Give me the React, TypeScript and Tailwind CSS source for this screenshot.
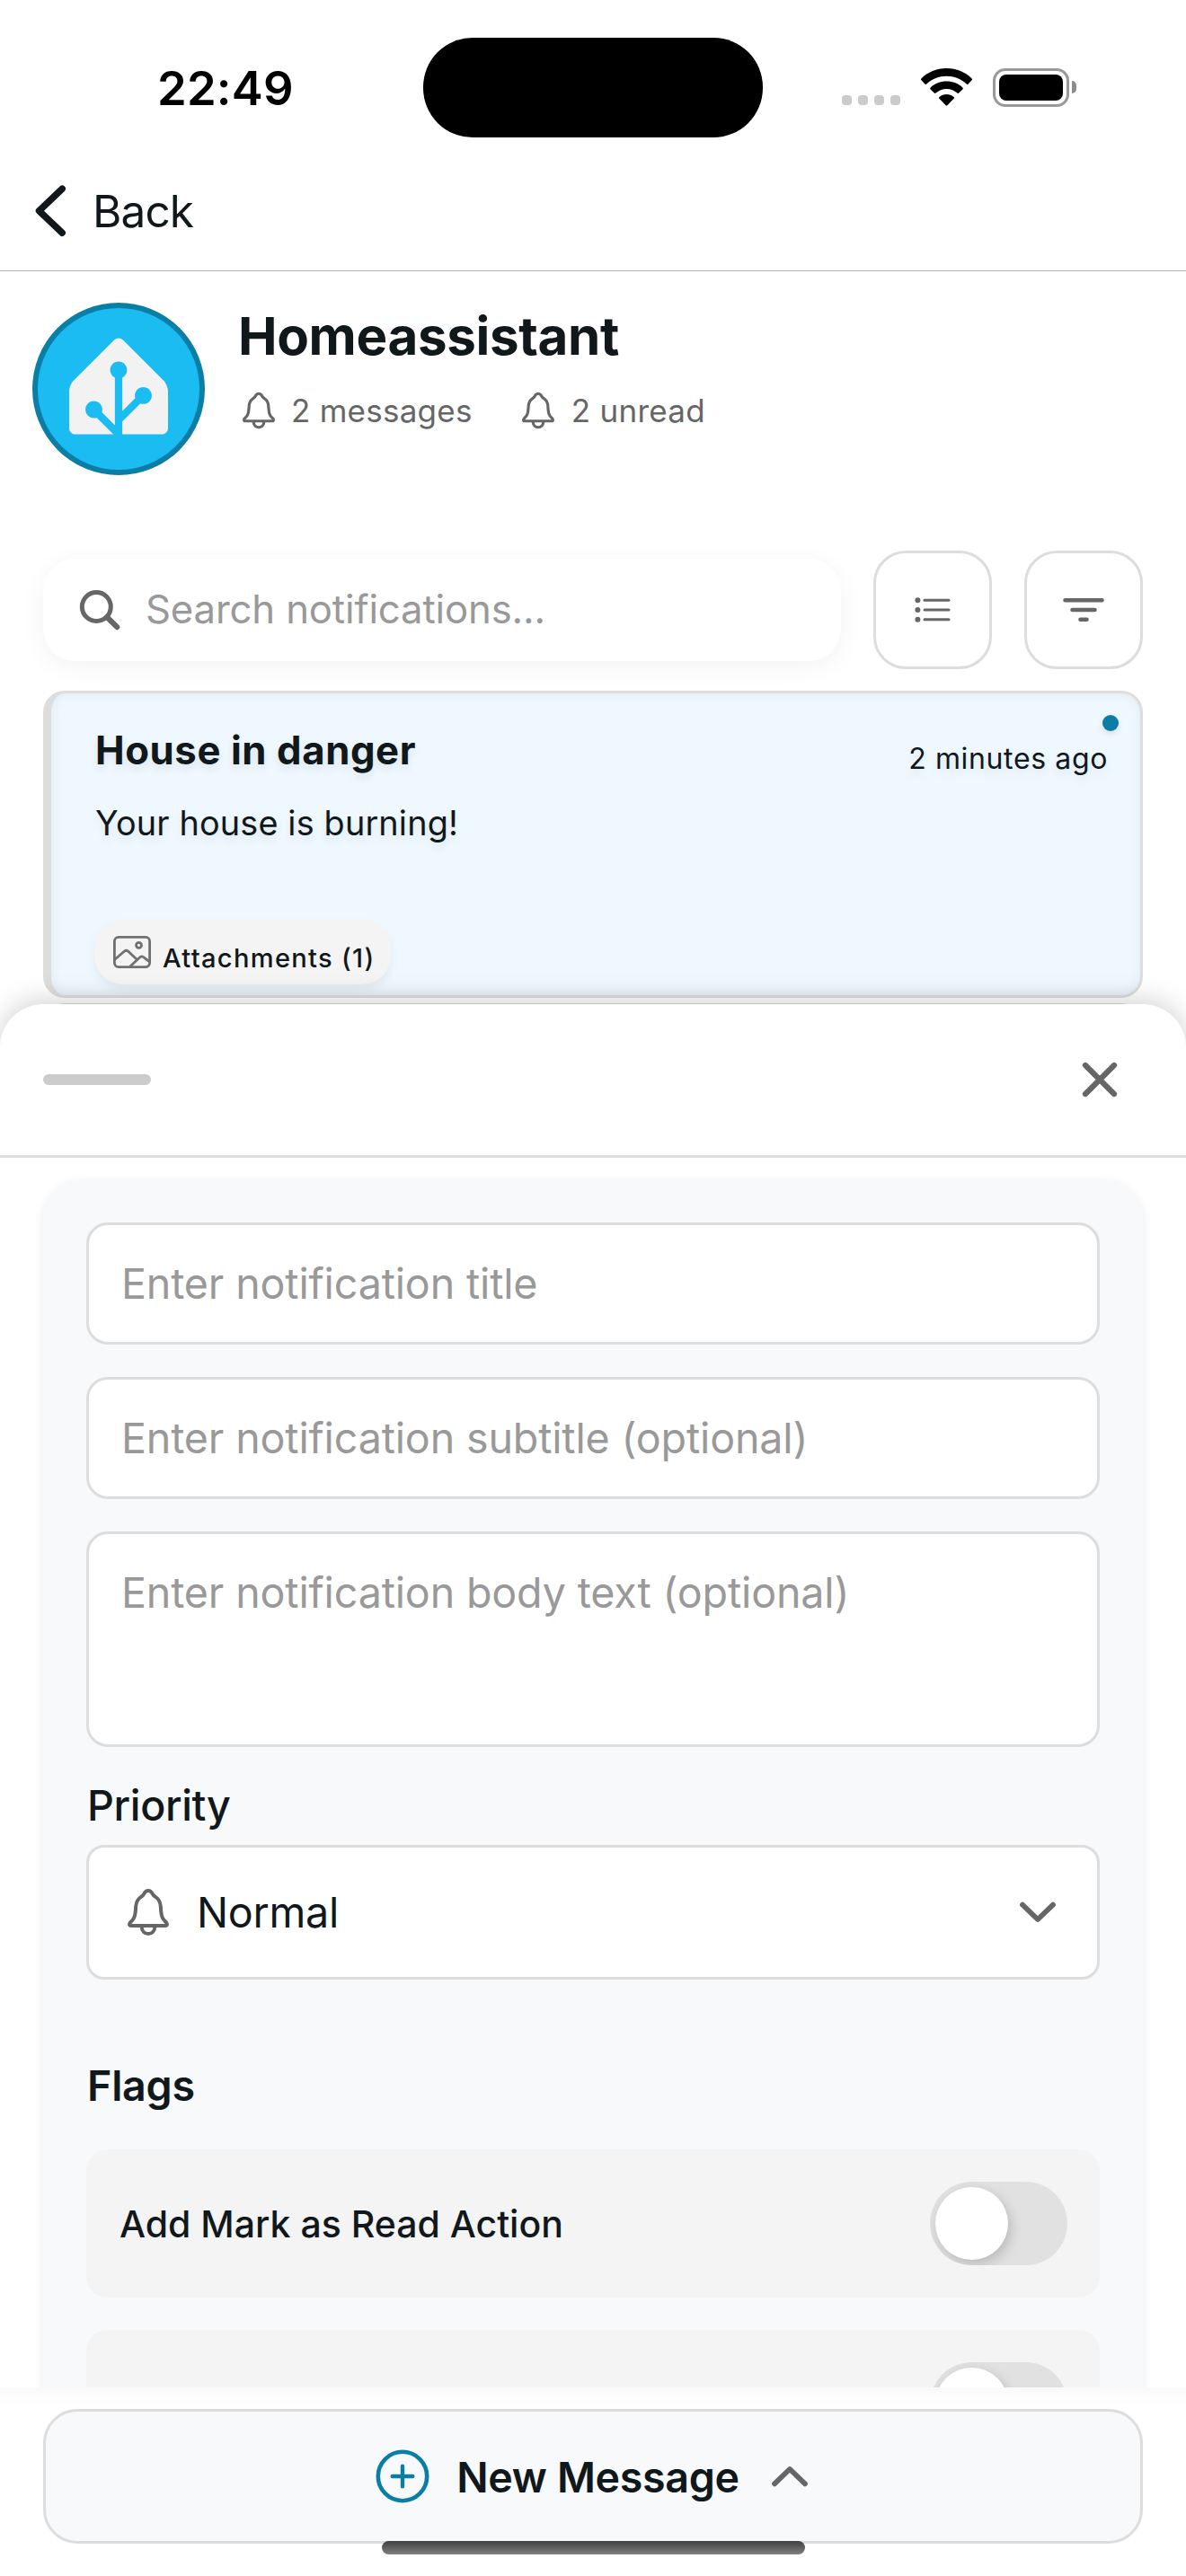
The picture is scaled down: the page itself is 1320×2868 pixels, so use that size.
import type { ReactNode } from 'react';

function BellIcon({ className, stroke }: { className: string; stroke: number }) {
  return (
    <svg viewBox="0 0 46 52" fill="none" stroke="#666" strokeWidth={stroke} strokeLinejoin="round" strokeLinecap="round" className={className}>
      <path d="M23 2C20.4 2 19 3.9 18.2 5.6C17.4 7.2 16.4 8 15 8.9C11.4 11.1 9.6 14.8 9.2 19.5C8.8 24.6 9.1 29 6.7 33C4.6 36.4 2 37.4 2 39.3C2 40.5 2.9 41 4.3 41H41.7C43.1 41 44 40.5 44 39.3C44 37.4 41.4 36.4 39.3 33C36.9 29 37.2 24.6 36.8 19.5C36.4 14.8 34.6 11.1 31 8.9C29.6 8 28.6 7.2 27.8 5.6C27 3.9 25.6 2 23 2Z" />
      <path d="M15.6 42C15.8 47 19 50 23 50S30.2 47 30.4 42" />
    </svg>
  );
}

function HomeAssistantLogo() {
  return (
    <svg viewBox="0 6 240 234" className="mb-[6px] h-[108px] w-[110px]" fill="#f2f2f2">
      <path d="M229.39 109.153L130.61 10.3725C124.78 4.5425 115.23 4.5425 109.4 10.3725L10.61 109.153C4.78 114.983 0 126.512 0 134.762V224.762C0 233.012 6.75 239.762 15 239.762H107.27L66.64 199.132C64.55 199.852 62.32 200.262 60 200.262C48.7 200.262 39.5 191.062 39.5 179.762C39.5 168.462 48.7 159.262 60 159.262C71.3 159.262 80.5 168.462 80.5 179.762C80.5 182.092 80.09 184.322 79.37 186.412L111 218.042V102.162C104.2 98.8225 99.5 91.8425 99.5 83.7725C99.5 72.4725 108.7 63.2725 120 63.2725C131.3 63.2725 140.5 72.4725 140.5 83.7725C140.5 91.8425 135.8 98.8225 129 102.162V183.432L160.46 151.972C159.84 150.012 159.5 147.932 159.5 145.772C159.5 134.472 168.7 125.272 180 125.272C191.3 125.272 200.5 134.472 200.5 145.772C200.5 157.072 191.3 166.272 180 166.272C177.5 166.272 175.12 165.802 172.91 164.982L129 208.892V239.772H225C233.25 239.772 240 233.022 240 224.772V134.772C240 126.522 235.23 115.002 229.39 109.162V109.153Z" />
    </svg>
  );
}

function StatusBar() {
  return (
    <div className="grid h-[194px] shrink-0 grid-cols-[471px_378px_471px] items-center">
      <div className="pt-[2px] pl-[175px] text-[52.5px] leading-[60px] font-semibold tracking-[0.22px] text-black">22:49</div>
      <div className="h-[111px] rounded-[55px] bg-black" />
      <div className="flex items-center pl-[88px]">
        <div className="mt-[29px] flex gap-[7px]">
          {[0, 1, 2, 3].map((i) => (
            <span key={i} className="size-[11px] rounded-[4px] bg-[#cbcbcb]" />
          ))}
        </div>
        <svg viewBox="0 0 57 42" className="ml-[23px] h-[42px] w-[57px]">
          <path d="M28.5 0C39.5 0 49.5 4.3 56.6 11.4a1.3 1.3 0 0 1 0 1.9L52.6 17.4a1.3 1.3 0 0 1-1.9 0C44.8 11.7 37 8.7 28.5 8.7S12.2 11.7 6.3 17.4a1.3 1.3 0 0 1-1.9 0L.4 13.3a1.3 1.3 0 0 1 0-1.9C7.5 4.3 17.5 0 28.5 0Z" />
          <path d="M28.5 14.6c7 0 13.2 2.6 17.9 6.9a1.3 1.3 0 0 1 0 1.9l-4.2 4.2a1.3 1.3 0 0 1-1.8 0C37.2 24.7 33.1 23 28.5 23s-8.7 1.7-11.9 4.6a1.3 1.3 0 0 1-1.8 0l-4.2-4.2a1.3 1.3 0 0 1 0-1.9c4.7-4.3 10.9-6.9 17.9-6.9Z" />
          <path d="M28.5 29c3.1 0 5.9 1.1 8.1 3a1.2 1.2 0 0 1 0 1.8l-7.2 7.5a1.3 1.3 0 0 1-1.8 0l-7.2-7.5a1.2 1.2 0 0 1 0-1.8c2.2-1.9 5-3 8.1-3Z" />
        </svg>
        <div className="ml-[23px] h-[43px] w-[85px] rounded-[14px] border-[3.5px] border-[#999] p-[4px]">
          <div className="h-full rounded-[8px] bg-black" />
        </div>
        <div className="ml-[3px] h-[14px] w-[5px] rounded-r-[5px] bg-[#8c8c8c]" />
      </div>
    </div>
  );
}

function NavBar() {
  return (
    <div className="flex h-[108px] shrink-0 items-center border-b border-[#b3b3b3] pb-[25px] pl-9">
      <svg viewBox="36 205 40 60" className="h-[60px] w-[40px]" fill="none" stroke="#11181c" strokeWidth="7.5" strokeLinecap="round" strokeLinejoin="round">
        <path d="M69.2 210.2L43.5 234.7L69.2 259.2" />
      </svg>
      <span className="ml-[27px] text-[49.5px] leading-[60px] tracking-[-0.9px]">Back</span>
    </div>
  );
}

function Header() {
  return (
    <div className="flex h-[311px] shrink-0 pt-[35px] pl-9">
      <div className="flex size-[192px] items-center justify-center rounded-full border-[6px] border-[#0a7ea4] bg-[#1abcf2]">
        <HomeAssistantLogo />
      </div>
      <div className="ml-[37px]">
        <div className="text-[58.3px] leading-[74px] font-bold tracking-[-0.35px]">Homeassistant</div>
        <div className="mt-[25px] flex h-[42px] items-center pl-[5px] text-[35px] leading-[42px] text-[#666]">
          <BellIcon className="h-[42px] w-[36px]" stroke={4} />
          <span className="ml-[18px] tracking-[0.25px]">2 messages</span>
          <BellIcon className="ml-[55px] h-[42px] w-[36px]" stroke={4} />
          <span className="ml-[19px] tracking-[0.28px]">2 unread</span>
        </div>
      </div>
    </div>
  );
}

function SquareButton({ children }: { children: ReactNode }) {
  return <div className="flex size-[132px] items-center justify-center rounded-[36px] border-[3px] border-[#ddd] bg-white">{children}</div>;
}

function SearchRow() {
  return (
    <div className="flex shrink-0 items-center gap-9 px-12">
      <div className="flex h-[114px] flex-1 items-center rounded-[36px] bg-white pl-10 shadow-[0_6px_28px_rgba(0,0,0,0.05)]">
        <svg viewBox="88 656 46 46" className="size-[46px]" fill="none" stroke="#666" strokeLinecap="round">
          <circle cx="107.3" cy="675.5" r="16" strokeWidth="5" />
          <path d="M119.5 687.5L130.3 698.2" strokeWidth="6" />
        </svg>
        <span className="ml-[28px] text-[43.7px] leading-[54px] tracking-[-0.16px] text-[#999]">Search notifications...</span>
      </div>
      <SquareButton>
        <svg viewBox="0 0 40 28" className="h-[28px] w-[40px]" fill="#666">
          {[3.2, 14, 24.8].map((y) => (
            <g key={y}>
              <circle cx="3.4" cy={y} r="3" />
              <rect x="9.5" y={y - 1.5} width="30" height="3" rx="1.5" />
            </g>
          ))}
        </svg>
      </SquareButton>
      <SquareButton>
        <svg viewBox="0 0 46 28" className="h-[28px] w-[46px]" stroke="#666" strokeWidth="4.6" strokeLinecap="round">
          <path d="M2.5 3.2H43.5M10.5 14H35.5M19.5 24.8H26.5" />
        </svg>
      </SquareButton>
    </div>
  );
}

function NotificationCard() {
  return (
    <div className="relative mx-12 mt-6 h-[342px] shrink-0 rounded-[24px] border-[3px] border-l-[9px] border-[#ddd] bg-[#eff7ff] px-12 pt-9 pr-9 shadow-[inset_0_0_14px_rgba(0,0,0,0.06)]">
      <span className="absolute top-6 right-6 size-[18px] rounded-full bg-[#0a7ea4] shadow-[0_3px_6px_rgba(0,0,0,0.1)]" />
      <div className="flex h-[54px] items-start justify-between pl-[1px]">
        <div className="mt-[1px] text-[43.7px] leading-[54px] font-bold tracking-[0.58px] text-shadow-[0_6px_10px_rgba(0,0,0,0.08)]">House in danger</div>
        <div className="mt-[17px] text-[32px] leading-[40px] tracking-[0.63px] text-shadow-[0_6px_10px_rgba(0,0,0,0.08)]">2 minutes ago</div>
      </div>
      <div className="mt-[29px] pl-[1px] text-[37.8px] leading-[50px] tracking-[0.16px] text-shadow-[0_6px_10px_rgba(0,0,0,0.08)]">Your house is burning!</div>
      <div className="mt-[83px] flex h-[72px] w-[330px] items-center rounded-[32px] bg-[#f4f4f4] pl-[21px] shadow-[0_6px_12px_rgba(0,0,0,0.06)]">
        <svg viewBox="0 0 42 36" className="h-[36px] w-[42px]" fill="none" stroke="#707070" strokeWidth="2.8" strokeLinejoin="round">
          <rect x="1.4" y="1.4" width="39.2" height="33.2" rx="4.5" />
          <circle cx="28.5" cy="10.3" r="3" />
          <path d="M1.5 26.5L12.2 17.2Q14.5 15.2 16.8 17.2L26.3 26.2M18.5 34.3L29.8 23.7Q31.8 22 33.8 23.7L40.5 28.8" />
        </svg>
        <span className="mt-[13px] ml-[13px] text-[29.1px] leading-[40px] font-medium tracking-[1.3px]">Attachments (1)</span>
      </div>
    </div>
  );
}

function Field({ placeholder, tall = false }: { placeholder: string; tall?: boolean }) {
  return (
    <div
      className={
        (tall ? 'h-[240px]' : 'h-[136px]') +
        ' rounded-[24px] border-[3px] border-[#ddd] bg-white pt-[35px] pl-9 text-[46.6px] leading-[60px] tracking-[-0.16px] text-[#999]'
      }
    >
      {placeholder}
    </div>
  );
}

function FlagRow({ label }: { label?: string }) {
  return (
    <div className="flex h-[165px] items-center justify-between rounded-[24px] bg-[#f4f4f4] pr-9 pl-[37px]">
      <span className="text-[41px] leading-[50px] font-medium">{label}</span>
      <div className="flex h-[93px] w-[153px] items-center overflow-hidden rounded-full bg-[#e1e1e1] pl-[6px]">
        <div className="size-[81px] rounded-full bg-white shadow-[3px_5px_14px_rgba(0,0,0,0.18)]" />
      </div>
    </div>
  );
}

function ComposeSheet() {
  return (
    <div className="relative -mt-12 flex h-[1540px] shrink-0 flex-col rounded-t-[48px] bg-white shadow-[0_-4px_30px_rgba(0,0,0,0.18)]">
      <div className="flex h-[171px] shrink-0 items-center justify-between border-b-[3px] border-[#ddd] pr-[74px] pl-12">
        <div className="h-3 w-[120px] rounded-full bg-[#ccc]" />
        <svg viewBox="0 0 44 44" className="size-[44px]" stroke="#666" strokeWidth="6.2" strokeLinecap="round">
          <path d="M6 6L38 38M38 6L6 38" />
        </svg>
      </div>
      <div className="min-h-0 flex-1 overflow-hidden">
        <div className="mx-12 mt-6 h-[1500px] rounded-[44px] bg-[#f8f9fb] p-12 shadow-[0_3px_12px_rgba(0,0,0,0.08)]">
          <div className="flex flex-col gap-9">
            <Field placeholder="Enter notification title" />
            <Field placeholder="Enter notification subtitle (optional)" />
            <Field placeholder="Enter notification body text (optional)" tall />
          </div>
          <div className="mt-[35px] pl-[1px] text-[46.6px] leading-[60px] font-medium tracking-[-0.36px]">Priority</div>
          <div className="mt-[14px] flex h-[150px] items-center rounded-[20px] border-[3px] border-[#ddd] bg-white px-[43px]">
            <BellIcon className="h-[52px] w-[46px]" stroke={4} />
            <span className="ml-[31px] flex-1 text-[46.6px] leading-[60px] tracking-[-0.26px]">Normal</span>
            <svg viewBox="0 0 46 28" className="h-[28px] w-[46px]" fill="none" stroke="#666" strokeWidth="5.8" strokeLinecap="round" strokeLinejoin="round">
              <path d="M6 5.7L23 22L40 5.7" />
            </svg>
          </div>
          <div className="mt-[88px] pl-[1px] text-[46.6px] leading-[60px] font-semibold tracking-[-0.25px]">Flags</div>
          <div className="mt-[41px] flex flex-col gap-9">
            <FlagRow label="Add Mark as Read Action" />
            <FlagRow />
          </div>
        </div>
      </div>
    </div>
  );
}

function BottomBar() {
  return (
    <div className="relative h-[210px] shrink-0 bg-white px-12 pt-6">
      <div className="absolute inset-x-0 top-0 h-5 bg-linear-to-b from-[#f9f9f9] to-white" />
      <div className="relative flex h-[150px] items-center justify-center rounded-[38px] border-[3px] border-[#ddd] bg-[#f8f9fb]">
        <svg viewBox="0 0 60 60" className="size-[60px]" fill="none" stroke="#0a7ea4" strokeLinecap="round">
          <circle cx="30" cy="30" r="27.2" strokeWidth="4.6" />
          <path d="M18.7 30H41.3M30 18.7V41.3" strokeWidth="4.4" />
        </svg>
        <span className="ml-[30px] pt-[1px] text-[46.6px] leading-[60px] font-semibold tracking-[-0.32px]">New Message</span>
        <svg viewBox="0 0 46 28" className="ml-[33px] h-[28px] w-[46px]" fill="none" stroke="#666" strokeWidth="5.8" strokeLinecap="round" strokeLinejoin="round">
          <path d="M6 22.3L23 6L40 22.3" />
        </svg>
      </div>
      <div className="absolute bottom-6 left-[425px] h-[15px] w-[471px] rounded-full bg-linear-to-b from-[#404040] to-[#808080]" />
    </div>
  );
}

export default function App() {
  return (
    <div className="flex h-[2868px] w-[1320px] flex-col overflow-hidden bg-white font-[Inter,sans-serif] text-[#11181c]">
      <div className="flex h-[1166px] shrink-0 flex-col overflow-hidden">
        <StatusBar />
        <NavBar />
        <Header />
        <SearchRow />
        <NotificationCard />
        <div className="mx-12 mt-[6px] h-[342px] shrink-0 rounded-[24px] border-[3px] border-l-[9px] border-[#ddd] bg-[#eff7ff]" />
      </div>
      <ComposeSheet />
      <BottomBar />
    </div>
  );
}
